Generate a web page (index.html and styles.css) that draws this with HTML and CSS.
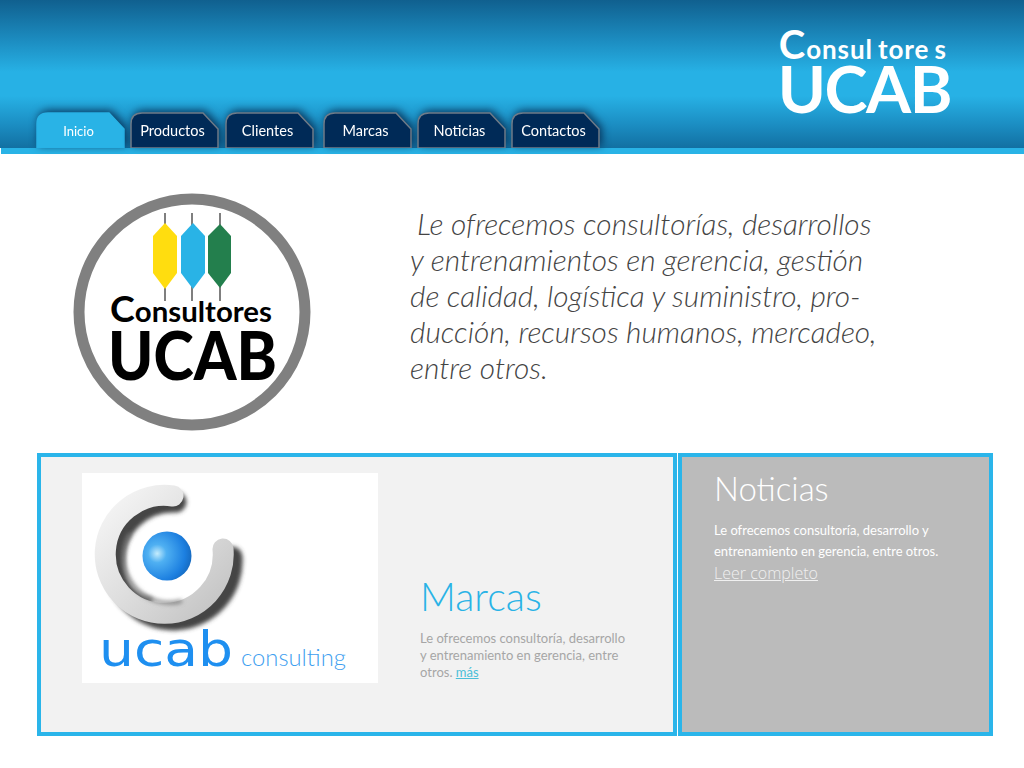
FILE: index.html
```html
<!DOCTYPE html>
<html lang="es">
  <head>
    <meta charset="UTF-8" />
    <title>Consultores UCAB</title>
    <link rel="stylesheet" href="styles.css">
  </head>
  <body>
    <svg class="defs" width="0" height="0">
      <symbol id="tab-shape" viewBox="0 0 89 36">
        <path d="M1 36V12Q1 1 12 1H73L88 17V36Z" />
      </symbol>
    </svg>

    <header class="header">
      <nav class="tabs">
        <a href="#" class="tab active"><svg><use href="#tab-shape" /></svg><span>Inicio</span></a>
        <a href="#" class="tab tab-gap-s"><svg><use href="#tab-shape" /></svg><span>Productos</span></a>
        <a href="#" class="tab tab-gap-l"><svg><use href="#tab-shape" /></svg><span>Clientes</span></a>
        <a href="#" class="tab"><svg><use href="#tab-shape" /></svg><span>Marcas</span></a>
        <a href="#" class="tab"><svg><use href="#tab-shape" /></svg><span>Noticias</span></a>
        <a href="#" class="tab"><svg><use href="#tab-shape" /></svg><span>Contactos</span></a>
      </nav>
      <div class="brand">
        <div class="brand-top"><span class="brand-c">C</span>onsul <span>tore</span> <span>s</span></div>
        <div class="brand-name">UCAB</div>
      </div>
    </header>
    <div class="header-line"></div>

    <section class="hero">
      <svg class="hero-logo" width="240" height="240" viewBox="0 0 240 240">
        <circle cx="120" cy="120" r="113" fill="#fff" stroke="#808080" stroke-width="11" />
        <g stroke="#7f7f7f" stroke-width="2">
          <path d="M93 21V109M120 21V109M148 21V109" />
        </g>
        <path d="M93 31L105 44V81L93 97L81 81V44Z" fill="#ffdd0f" />
        <path d="M121 31L133 44V81L121 97L109 81V44Z" fill="#29b3e6" />
        <path d="M148 32L159 44V81L148 96L136 81V44Z" fill="#237f4d" />
        <text x="38" y="130" class="hero-top" textLength="162" lengthAdjust="spacingAndGlyphs"><tspan class="hero-c">C</tspan>onsultores</text>
        <text x="36" y="188" class="hero-name" textLength="169" lengthAdjust="spacingAndGlyphs">UCAB</text>
      </svg>
      <p class="hero-text">
        <span class="first">Le ofrecemos consultorías, desarrollos</span><br>
        y entrenamientos en gerencia, gestión<br>
        de calidad, logística y suministro, pro-<br>
        ducción, recursos humanos, mercadeo,<br>
        entre otros.
      </p>
    </section>

    <section class="panels">
      <div class="panel-marcas">
        <svg class="consulting-logo" width="296" height="210" viewBox="0 0 296 210">
          <defs>
            <linearGradient id="ring" x1="0" y1="0" x2="1" y2="1">
              <stop offset="0" stop-color="#f6f6f6" />
              <stop offset="0.5" stop-color="#dedede" />
              <stop offset="1" stop-color="#c2c2c2" />
            </linearGradient>
            <radialGradient id="ball" cx="0.3" cy="0.45" r="0.75">
              <stop offset="0" stop-color="#c4ecfd" />
              <stop offset="0.25" stop-color="#4fb0f2" />
              <stop offset="0.75" stop-color="#1c7fe0" />
              <stop offset="1" stop-color="#1465b8" />
            </radialGradient>
            <filter id="soft" x="-20%" y="-20%" width="140%" height="140%">
              <feGaussianBlur stdDeviation="2" />
            </filter>
          </defs>
          <path d="M91 25A59 59 0 1 0 147 80" fill="none" stroke="#444" stroke-width="21" stroke-linecap="round" filter="url(#soft)" transform="translate(3 4)" />
          <path d="M90 23A47 47 0 0 0 70 128" fill="none" stroke="#555" stroke-width="6" filter="url(#soft)" />
          <path d="M91 23A59 59 0 1 0 141 76" fill="none" stroke="url(#ring)" stroke-width="21" stroke-linecap="round" />
          <path d="M48 60A46 46 0 0 0 100 128" fill="none" stroke="#777" stroke-width="3" filter="url(#soft)" />
          <circle cx="85" cy="83" r="24.5" fill="url(#ball)" />
          <text x="17" y="193" class="logo-ucab" textLength="134" lengthAdjust="spacingAndGlyphs">ucab</text>
          <text x="159" y="193" class="logo-consulting" textLength="105" lengthAdjust="spacingAndGlyphs">consulting</text>
        </svg>
        <div class="marcas-copy">
          <h2>Marcas</h2>
          <p>Le ofrecemos consultoría, desarrollo<br>y entrenamiento en gerencia, entre<br>otros. <a href="#">más</a></p>
        </div>
      </div>
      <div class="panel-noticias">
        <h2>Noticias</h2>
        <p>Le ofrecemos consultoría, desarrollo y<br>entrenamiento en gerencia, entre otros.</p>
        <a href="#">Leer completo</a>
      </div>
    </section>
  </body>
</html>
```

FILE: styles.css
```css
html,
body,
h2,
p {
  margin: 0;
  padding: 0;
}

body {
  background: #fff;
  font-family: "Lato", "Open Sans", sans-serif;
  overflow: hidden;
}

a {
  color: inherit;
}

.defs {
  display: block;
  height: 0;
}

.header {
  height: 148px;
  display: flex;
  justify-content: space-between;
  background: linear-gradient(#10608f 0, #1c8cc0 40px, #27b1e5 72px, #27b1e5 96px, #1b8dc2 125px, #1270a2 148px);
}

.tabs {
  display: flex;
  align-items: flex-end;
  padding-left: 36px;
}

.tab {
  display: grid;
  width: 89px;
  height: 36px;
  margin-right: 5px;
  color: #fff;
  font-size: 14.5px;
  text-decoration: none;
  filter: drop-shadow(2px -2px 4px rgba(0, 25, 60, 0.75));
}

.tab.tab-gap-s {
  margin-right: 6px;
}

.tab.tab-gap-l {
  margin-right: 9px;
}

.tab svg,
.tab span {
  grid-area: 1 / 1;
}

.tab svg {
  width: 89px;
  height: 36px;
  fill: #002a57;
  stroke: #6f7b88;
  stroke-width: 1.5;
}

.tab span {
  place-self: center;
  padding: 1px 4px 0 0;
}

.tab.active {
  font-size: 13px;
}

.tab.active svg {
  fill: #29b3e6;
  stroke: #29b3e6;
}

.brand {
  margin: 26px 73px 0 0;
  color: #fff;
  font-weight: 700;
}

.brand-top {
  padding-left: 3px;
  font-size: 26px;
  line-height: 36px;
  letter-spacing: 0.9px;
  white-space: nowrap;
}

.brand-top span {
  margin-left: -2px;
}

.brand-c {
  font-size: 40px;
}

.brand-name {
  font-size: 65px;
  line-height: 42px;
  letter-spacing: -1.5px;
}

.header-line {
  height: 6px;
  margin-left: 1px;
  background: #29b3e6;
}

.hero {
  height: 299px;
  display: flex;
  align-items: flex-start;
  padding-left: 72px;
  box-sizing: border-box;
}

.hero-logo {
  margin-top: 38px;
}

.hero-top {
  font-family: "Lato", sans-serif;
  font-size: 29px;
  font-weight: 700;
}

.hero-c {
  font-size: 37px;
}

.hero-name {
  font-family: "Lato", sans-serif;
  font-size: 67px;
  font-weight: 900;
}

.hero-text {
  margin: 52px 0 0 98px;
  color: #444;
  font-size: 29.8px;
  font-style: italic;
  font-weight: 300;
  line-height: 36px;
  white-space: nowrap;
}

.first {
  margin-left: 7px;
}

.panels {
  display: flex;
  gap: 1px;
  padding-left: 37px;
}

.panel-marcas {
  width: 640px;
  height: 283px;
  display: flex;
  box-sizing: border-box;
  padding: 16px 0 0 41px;
  background: #f2f2f2;
  border: 4px solid #2ab5ea;
}

.consulting-logo {
  background: #fff;
}

.logo-ucab {
  font-family: "DejaVu Sans", sans-serif;
  font-size: 48px;
  fill: #1e8ff0;
}

.logo-consulting {
  font-family: "Lato", sans-serif;
  font-size: 24px;
  font-weight: 300;
  fill: #3f9ff0;
}

.marcas-copy {
  margin: 99px 0 0 42px;
}

.marcas-copy h2 {
  color: #29b3e6;
  font-size: 39.5px;
  font-weight: 300;
  line-height: 48px;
}

.marcas-copy p {
  margin-top: 10px;
  color: #a6a6a6;
  font-size: 13px;
  line-height: 17px;
}

.marcas-copy a {
  color: #4cbfd8;
}

.panel-noticias {
  width: 315px;
  height: 283px;
  box-sizing: border-box;
  padding: 11px 0 0 32px;
  background: #bbb;
  border: 4px solid #2ab5ea;
  color: #fff;
}

.panel-noticias h2 {
  font-size: 33px;
  font-weight: 300;
  line-height: 40px;
}

.panel-noticias p {
  margin-top: 12px;
  font-size: 13px;
  line-height: 21px;
}

.panel-noticias a {
  display: block;
  color: #f0f0f0;
  font-family: "Open Sans", sans-serif;
  font-size: 16px;
  font-weight: 300;
  line-height: 22px;
}
```
